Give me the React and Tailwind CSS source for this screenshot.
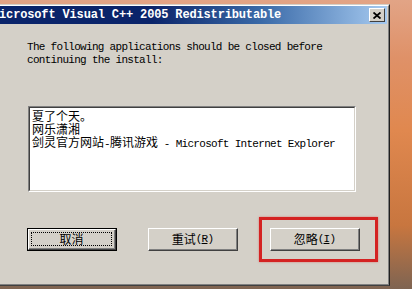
import React from 'react';

const MONO = { fontFamily: '"Liberation Mono", "Noto Sans CJK SC", monospace' };

function Ascii({ children }) {
  return <span className="text-[11px] tracking-[-0.7px]">{children}</span>;
}

function ClassicButton({ children, isDefault }) {
  if (isDefault) {
    return (
      <div className="w-[90px] h-[23px] border border-black">
        <div className="h-full border-t border-l border-white border-r border-b border-r-[#404040] border-b-[#404040] bg-[#d4d0c8]">
          <div className="h-full border-r border-b border-[#808080] p-[2px]">
            <div className="h-full border border-dotted border-black flex items-center justify-center text-[12px] text-black">
              {children}
            </div>
          </div>
        </div>
      </div>
    );
  }
  return (
    <div className="w-[90px] h-[23px] border-t border-l border-white border-r border-b border-r-[#404040] border-b-[#404040] bg-[#d4d0c8]">
      <div className="h-full border-r border-b border-[#808080] flex items-center justify-center text-[12px] text-black">
        {children}
      </div>
    </div>
  );
}

export default function App() {
  return (
    <div
      className="relative w-[412px] h-[289px] overflow-hidden bg-[linear-gradient(180deg,#e2a486_0%,#df9168_20%,#e0884f_45%,#c8763f_78%,#7e6452_100%)]"
      style={{ fontFamily: '"Noto Sans CJK SC", sans-serif' }}
    >
      {/* dialog window */}
      <div className="absolute left-[-8px] top-[4px] w-[398px] h-[282px] bg-[#d4d0c8] border-t border-l border-[#d4d0c8] border-r border-b border-r-[#202020] border-b-[#404040]">
        <div className="h-full flex flex-col border-t border-l border-white border-r border-b border-r-[#808080] border-b-[#808080] px-[1px]">
          {/* title bar */}
          <div className="h-[18px] flex items-center justify-between overflow-hidden bg-[linear-gradient(90deg,#0a246a_0%,#0a246a_40%,#3a6aa8_68%,#a6caf0_100%)]">
            <span
              className="ml-[-3px] text-[12px] font-bold tracking-[-0.15px] text-white leading-none whitespace-nowrap"
              style={MONO}
            >
              Microsoft Visual C++ 2005 Redistributable
            </span>
            <div className="mr-[2px] w-[16px] h-[14px] bg-[#d4d0c8] border-t border-l border-white border-r border-b border-r-[#404040] border-b-[#404040] flex items-center justify-center">
              <svg width="8" height="7" viewBox="0 0 8 7">
                <path d="M0.5 0.5 L7.5 6.5 M7.5 0.5 L0.5 6.5" stroke="#000" strokeWidth="1.8" />
              </svg>
            </div>
          </div>

          {/* message */}
          <div
            className="mt-[17px] pl-[32px] text-[11px] tracking-[-0.7px] leading-[13px] text-black whitespace-nowrap"
            style={MONO}
          >
            <div>The following applications should be closed before</div>
            <div>continuing the install:</div>
          </div>

          {/* list box */}
          <div className="mt-[39px] ml-[33px] w-[328px] h-[86px] border-t border-l border-[#808080] border-r border-b border-r-white border-b-white">
            <div className="h-full bg-white border-t border-l border-[#404040] border-r border-b border-r-[#d4d0c8] border-b-[#d4d0c8] pl-[2px] pt-[1px] text-[12px] leading-[13px] text-black whitespace-nowrap">
              <div>夏了个天。</div>
              <div>网乐潇湘</div>
              <div>
                剑灵官方网站<span style={MONO}><Ascii>-</Ascii></span>腾讯游戏
                <span style={MONO}><Ascii> - Microsoft Internet Explorer</Ascii></span>
              </div>
            </div>
          </div>

          {/* buttons */}
          <div className="mt-[36px] ml-[32px] flex gap-[30px]">
            <ClassicButton isDefault>取消</ClassicButton>
            <div className="ml-[1px]">
              <ClassicButton>
                重试<span style={MONO}><Ascii>(<span className="underline">R</span>)</Ascii></span>
              </ClassicButton>
            </div>
            <div className="ml-[2px]">
              <ClassicButton>
                忽略<span style={MONO}><Ascii>(<span className="underline">I</span>)</Ascii></span>
              </ClassicButton>
            </div>
          </div>
        </div>
      </div>

      {/* red annotation rectangle */}
      <div className="absolute left-[259px] top-[217px] w-[119px] h-[45px] border-[3px] border-[#d42222] shadow-[0_0_2px_rgba(220,40,40,0.5)]" />
    </div>
  );
}
